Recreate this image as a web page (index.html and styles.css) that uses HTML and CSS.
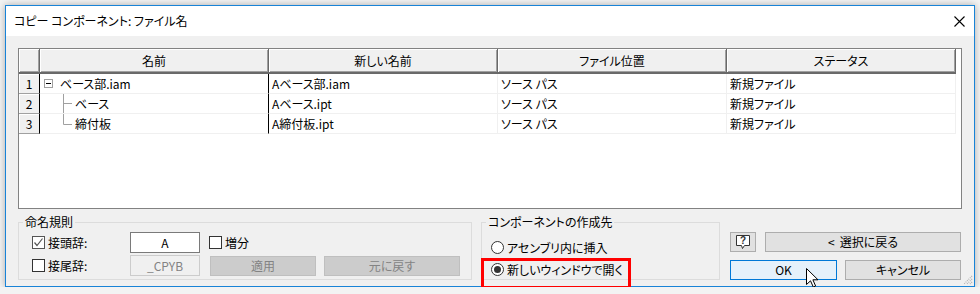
FILE: index.html
```html
<!DOCTYPE html>
<html lang="ja">

<head>
  <meta charset="UTF-8" />
  <meta name="viewport" content="width=device-width, initial-scale=1.0" />
  <title>コピー コンポーネント: ファイル名</title>
  <link rel="stylesheet" href="styles.css">
</head>

<body>
  <div class="window">
    <div class="titlebar">
      <span class="title">コピー コンポーネント: ファイル名</span>
      <svg class="close" width="11" height="11" viewBox="0 0 11 11">
        <path d="M0.5 0.5L10.5 10.5M10.5 0.5L0.5 10.5" stroke="#000" stroke-width="1.1" fill="none" />
      </svg>
    </div>

    <div class="content">
      <div class="grid-frame">
        <table class="file-table">
          <colgroup>
            <col class="col-num">
            <col class="col-data">
            <col class="col-data">
            <col class="col-data">
            <col class="col-data">
          </colgroup>
          <thead>
            <tr>
              <th class="num"></th>
              <th>名前</th>
              <th>新しい名前</th>
              <th>ファイル位置</th>
              <th>ステータス</th>
            </tr>
          </thead>
          <tbody>
            <tr>
              <td class="num">1</td>
              <td class="name">
                <div class="name-cell">
                  <svg class="tree-minus" width="9" height="9" viewBox="0 0 9 9">
                    <rect x="0.5" y="0.5" width="8" height="8" fill="#fff" stroke="#a0a0a0" />
                    <path d="M2 4.5H7" stroke="#000" />
                  </svg>
                  ベース部.iam
                </div>
              </td>
              <td>Aベース部.iam</td>
              <td>ソース パス</td>
              <td>新規ファイル</td>
            </tr>
            <tr>
              <td class="num">2</td>
              <td class="name">
                <div class="name-cell">
                  <svg class="tree-line" width="31" height="19" viewBox="0 0 31 19">
                    <path d="M19.5 0V19M19.5 9.5H28" stroke="#a0a0a0" />
                  </svg>
                  ベース
                </div>
              </td>
              <td>Aベース.ipt</td>
              <td>ソース パス</td>
              <td>新規ファイル</td>
            </tr>
            <tr>
              <td class="num">3</td>
              <td class="name">
                <div class="name-cell">
                  <svg class="tree-line" width="31" height="19" viewBox="0 0 31 19">
                    <path d="M19.5 0V10.5M19.5 10.5H28" stroke="#a0a0a0" />
                  </svg>
                  締付板
                </div>
              </td>
              <td>A締付板.ipt</td>
              <td>ソース パス</td>
              <td>新規ファイル</td>
            </tr>
          </tbody>
        </table>
      </div>

      <div class="bottom">
        <fieldset class="group naming">
          <legend>命名規則</legend>
          <div class="naming-row">
            <label class="check-label">
              <span class="check checked">
                <svg width="11" height="11" viewBox="0 0 11 11">
                  <path d="M1.5 5.5L4 8.5L9.5 1.5" stroke="#555" stroke-width="1.2" fill="none" />
                </svg>
              </span>接頭辞:
            </label>
            <span class="text-input">A</span>
            <label class="check-label increment">
              <span class="check"></span>増分
            </label>
          </div>
          <div class="naming-row">
            <label class="check-label">
              <span class="check"></span>接尾辞:
            </label>
            <span class="text-input disabled">_CPYB</span>
            <button class="btn disabled apply">適用</button>
            <button class="btn disabled revert">元に戻す</button>
          </div>
        </fieldset>

        <fieldset class="group target">
          <legend>コンポーネントの作成先</legend>
          <label class="radio-row">
            <span class="radio"></span>アセンブリ内に挿入
          </label>
          <label class="radio-row marked">
            <span class="radio selected"></span>新しいウィンドウで開く
          </label>
        </fieldset>

        <div class="actions">
          <div class="action-row">
            <button class="btn help">
              <svg width="16" height="16" viewBox="0 0 16 16">
                <path d="M1.5 1.5H14.5V11.5H9.5L7.5 14.5L6.5 11.5H1.5Z" fill="#fff" stroke="#333" />
                <text x="8" y="10" text-anchor="middle" font-size="10" font-weight="bold" font-family="Liberation Sans, sans-serif" fill="#333">?</text>
              </svg>
            </button>
            <button class="btn back"><span class="back-arrow">&lt;</span>選択に戻る</button>
          </div>
          <div class="action-row">
            <button class="btn default ok">OK
              <svg class="cursor" width="13" height="20" viewBox="0 0 13 20">
                <path d="M0.5 0.5V16.5L4.5 12.8L7.3 19L9.6 18L6.9 11.8H12Z" fill="#fff" stroke="#000" />
              </svg>
            </button>
            <button class="btn cancel">キャンセル</button>
          </div>
        </div>
      </div>
    </div>

    <svg class="grip" width="10" height="10" viewBox="0 0 10 10">
      <path d="M9 1L1 9M9 4L4 9M9 7L7 9" stroke="#b4b4b4" stroke-width="1.2" stroke-dasharray="1 1" />
    </svg>
  </div>
</body>

</html>
```

FILE: styles.css
```css
* {
  box-sizing: border-box;
}

body {
  margin: 0;
  padding: 5px 0 0 5px;
  background: #f3f3f3;
  font-family: "Noto Sans CJK JP", "Noto Sans", sans-serif;
  font-size: 12px;
  font-feature-settings: "palt";
  color: #000;
}

.window {
  width: 970px;
  height: 282px;
  border: 1px solid #1883d7;
  background: #f0f0f0;
  box-shadow: 0 0 7px rgba(0, 0, 0, 0.3);
  display: flex;
  flex-direction: column;
  position: relative;
}

/* タイトルバー */
.titlebar {
  height: 30px;
  background: #fff;
  display: flex;
  align-items: center;
  justify-content: space-between;
  padding: 0 9px 0 8px;
}

.title {
  line-height: 16px;
}

.content {
  padding: 12px 12px 0 12px;
}

/* ファイル一覧 */
.grid-frame {
  height: 161px;
  border: 1px solid #828282;
  background: #fff;
}

.file-table {
  border-collapse: separate;
  border-spacing: 0;
  table-layout: fixed;
  width: 937px;
}

.col-num {
  width: 21px;
}

.col-data {
  width: 229px;
}

.file-table th,
.file-table td {
  padding: 0 3px;
  white-space: nowrap;
  overflow: hidden;
  font-weight: normal;
  line-height: 16px;
  text-align: left;
}

.file-table th {
  height: 25px;
  background: #f0f0f0;
  border-right: 1px solid #696969;
  border-bottom: 2px solid #696969;
  box-shadow: inset 1px 1px 0 #fff, inset -1px -1px 0 #a0a0a0;
  text-align: center;
}

.file-table td {
  height: 20px;
  border-right: 1px solid #f0f0f0;
  border-bottom: 1px solid #f0f0f0;
}

.file-table td.num {
  padding: 0;
  background: #f0f0f0;
  text-align: center;
  border-right: 1px solid #000;
  border-bottom: 1px solid #a0a0a0;
  box-shadow: inset 1px 1px 0 #fff;
}

.file-table td.name {
  padding: 0 0 0 4px;
  border-right-color: #000;
}

.name-cell {
  display: flex;
  align-items: center;
  height: 19px;
}

.tree-minus {
  margin-right: 7px;
}

/* 下部 */
.bottom {
  display: flex;
  margin-top: 6px;
}

.group {
  margin: 0;
  border: 1px solid #dcdcdc;
  min-width: 0;
}

.group legend {
  padding: 0 2px;
  line-height: 14px;
}

.naming {
  width: 454px;
  padding: 3px 0 3px 13px;
}

.naming legend {
  margin-left: -9px;
}

.naming-row {
  display: flex;
  align-items: center;
  height: 21px;
}

.naming-row + .naming-row {
  margin-top: 2px;
}

.check-label {
  display: flex;
  align-items: center;
  width: 98px;
}

.check-label.increment {
  width: auto;
  margin-left: 9px;
}

.check {
  width: 13px;
  height: 13px;
  border: 1px solid #333;
  background: #fff;
  margin-right: 3px;
  display: flex;
  align-items: center;
  justify-content: center;
}

.check.checked {
  border-color: #555;
}

.text-input {
  width: 70px;
  height: 21px;
  border: 1px solid #7a7a7a;
  background: #fff;
  text-align: center;
  line-height: 19px;
}

.text-input.disabled {
  border-color: #cccccc;
  background: #f0f0f0;
  color: #838383;
}

.btn {
  height: 20px;
  padding: 0;
  border: 1px solid #adadad;
  background: #e1e1e1;
  font: inherit;
  line-height: 18px;
  color: #000;
  position: relative;
}

.btn.disabled {
  background: #cccccc;
  border-color: #bfbfbf;
  color: #838383;
}

.btn.default {
  background: #e5f1fb;
  border-color: #0078d7;
}

.apply {
  width: 106px;
  margin-left: 10px;
}

.revert {
  width: 136px;
  margin-left: 8px;
}

.target {
  width: 239px;
  margin-left: 9px;
  padding: 8px 0 0 9px;
}

.target legend {
  margin-left: -5px;
}

.radio-row {
  display: flex;
  align-items: center;
  height: 20px;
  position: relative;
}

.radio-row + .radio-row {
  margin-top: 2px;
}

.radio {
  width: 13px;
  height: 13px;
  border: 1px solid #333;
  border-radius: 50%;
  background: #fff;
  margin-right: 3px;
  display: flex;
  align-items: center;
  justify-content: center;
}

.radio.selected::before {
  content: "";
  width: 7px;
  height: 7px;
  border-radius: 50%;
  background: #333;
}

/* 赤い注記枠 */
.radio-row.marked::after {
  content: "";
  position: absolute;
  left: -10px;
  top: -1px;
  width: 144px;
  height: 25px;
  border: 3px solid #f00;
}

.actions {
  width: 231px;
  margin-left: 10px;
  padding-top: 17px;
}

.action-row {
  display: flex;
}

.action-row + .action-row {
  margin-top: 8px;
}

.help {
  width: 26px;
  display: flex;
  align-items: center;
  justify-content: center;
}

.back {
  width: 196px;
  margin-left: 9px;
}

.back-arrow {
  margin-right: 5px;
}

.ok {
  width: 107px;
}

.cancel {
  width: 116px;
  margin-left: 8px;
}

.cursor {
  position: absolute;
  left: 75px;
  top: 7px;
}

.grip {
  position: absolute;
  right: 1px;
  bottom: 1px;
}
```
